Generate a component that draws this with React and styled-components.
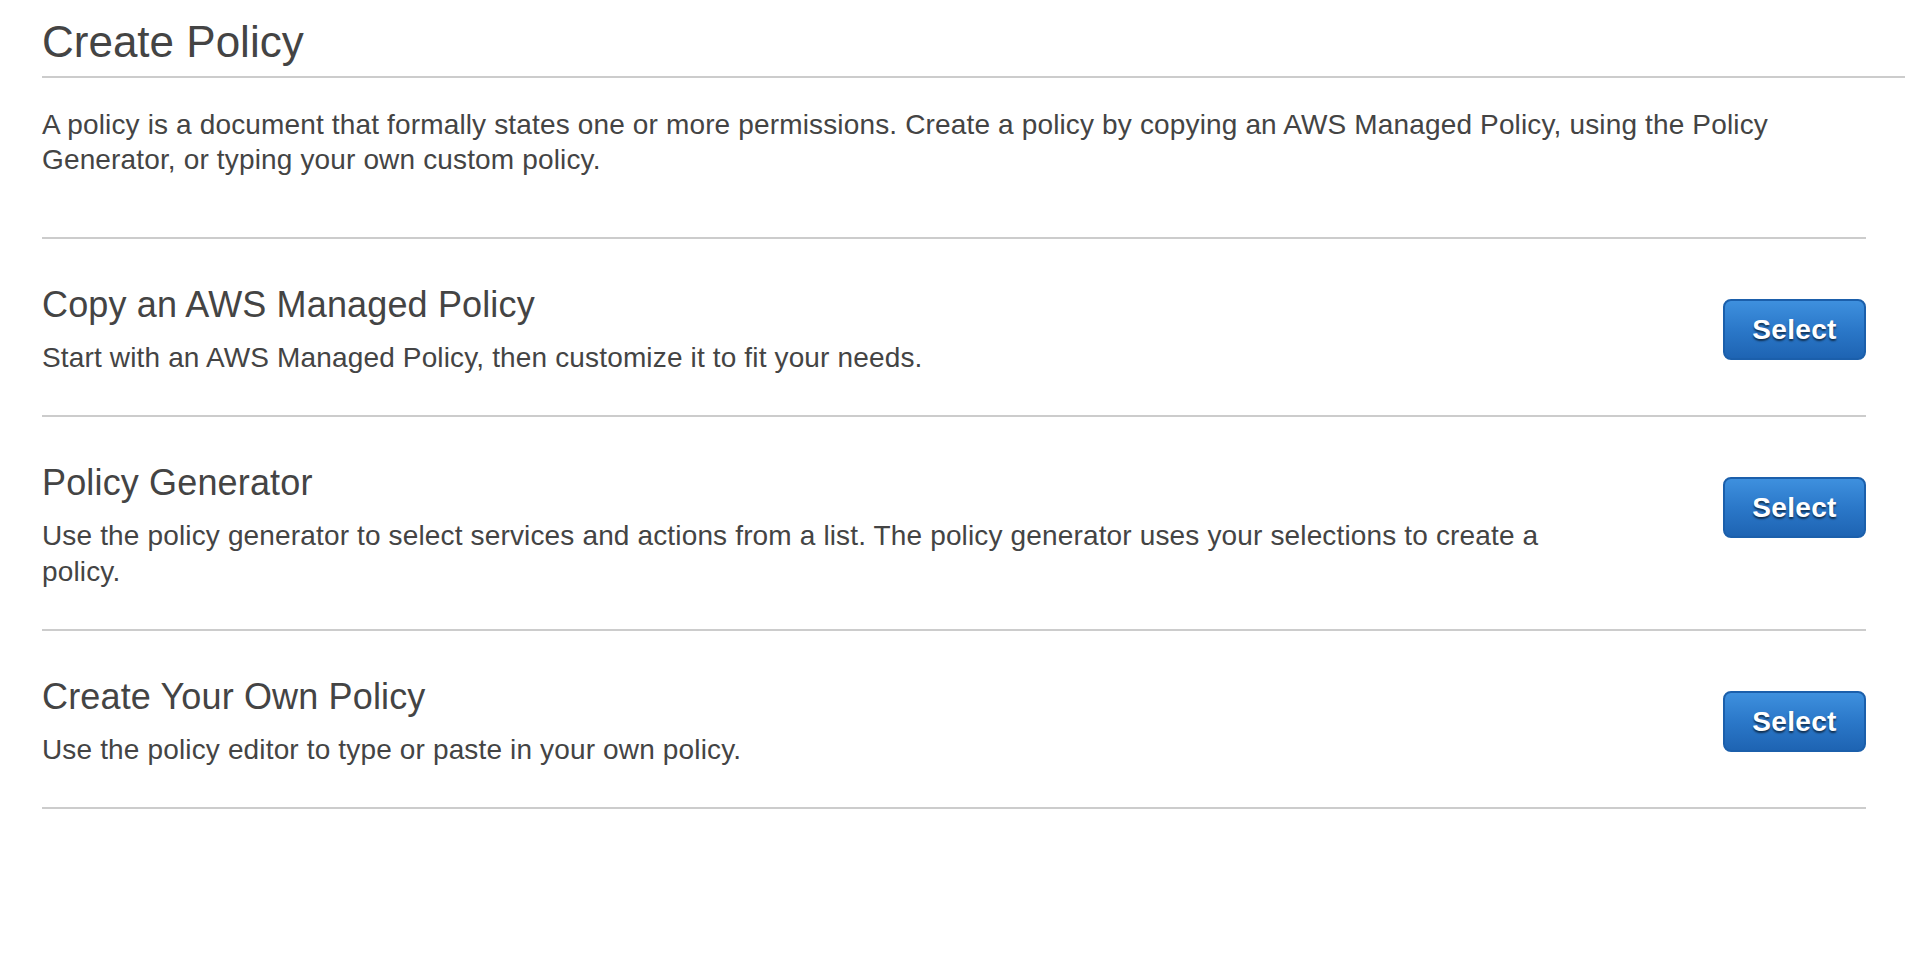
import React from "react";
import styled, { createGlobalStyle } from "styled-components";

const GlobalStyle = createGlobalStyle`
  html, body {
    margin: 0;
    padding: 0;
    background: #ffffff;
  }
  body {
    font-family: "Liberation Sans", Arial, Helvetica, sans-serif;
    color: #444444;
  }
`;

const Page = styled.div`
  padding: 0 17px 0 42px;
`;

const Header = styled.header`
  display: flex;
  flex-direction: column;
`;

const Title = styled.h1`
  margin: 18px 0 0;
  padding-bottom: 10px;
  font-size: 44px;
  line-height: 48px;
  font-weight: 400;
  color: #444444;
  border-bottom: 2px solid #cccccc;
`;

const Intro = styled.p`
  margin: 29px 39px 0 0;
  padding-bottom: 60px;
  font-size: 28px;
  line-height: 35px;
  letter-spacing: 0.15px;
  color: #444444;
  border-bottom: 2px solid #cccccc;
`;

const List = styled.div`
  display: flex;
  flex-direction: column;
  margin-right: 39px;
`;

const Option = styled.section`
  display: grid;
  grid-template-columns: 1fr auto;
  column-gap: 120px;
  align-items: start;
  padding: 44px 0 39px;
  border-bottom: 2px solid #cccccc;
`;

const OptionText = styled.div`
  display: flex;
  flex-direction: column;
  gap: 13px;
`;

const OptionTitle = styled.h2`
  margin: 0;
  font-size: 36px;
  line-height: 44px;
  font-weight: 400;
  letter-spacing: 0.15px;
  color: #444444;
`;

const OptionDesc = styled.p`
  margin: 0;
  font-size: 28px;
  line-height: 36px;
  letter-spacing: 0.15px;
  color: #444444;
`;

const SelectButton = styled.button`
  width: 143px;
  height: 61px;
  margin-top: 16px;
  border: 2px solid #1b5fab;
  border-radius: 8px;
  background: linear-gradient(to bottom, #3e90de 0%, #2b78c9 50%, #1e64b3 100%);
  color: #ffffff;
  font-family: "Liberation Sans", Arial, Helvetica, sans-serif;
  font-size: 28px;
  font-weight: 700;
  letter-spacing: 0.3px;
  text-shadow: 0 2px 2px rgba(0, 0, 0, 0.6);
  cursor: pointer;
  padding: 0;
`;

const options = [
  {
    title: "Copy an AWS Managed Policy",
    desc: "Start with an AWS Managed Policy, then customize it to fit your needs.",
  },
  {
    title: "Policy Generator",
    desc: "Use the policy generator to select services and actions from a list. The policy generator uses your selections to create a policy.",
  },
  {
    title: "Create Your Own Policy",
    desc: "Use the policy editor to type or paste in your own policy.",
  },
];

export default function App() {
  return (
    <>
      <GlobalStyle />
      <Page>
        <Header>
          <Title>Create Policy</Title>
          <Intro>
            A policy is a document that formally states one or more permissions. Create a policy by copying an AWS Managed Policy, using the Policy Generator, or typing your own custom policy.
          </Intro>
        </Header>
        <List>
          {options.map((o) => (
            <Option key={o.title}>
              <OptionText>
                <OptionTitle>{o.title}</OptionTitle>
                <OptionDesc>{o.desc}</OptionDesc>
              </OptionText>
              <SelectButton type="button">Select</SelectButton>
            </Option>
          ))}
        </List>
      </Page>
    </>
  );
}
